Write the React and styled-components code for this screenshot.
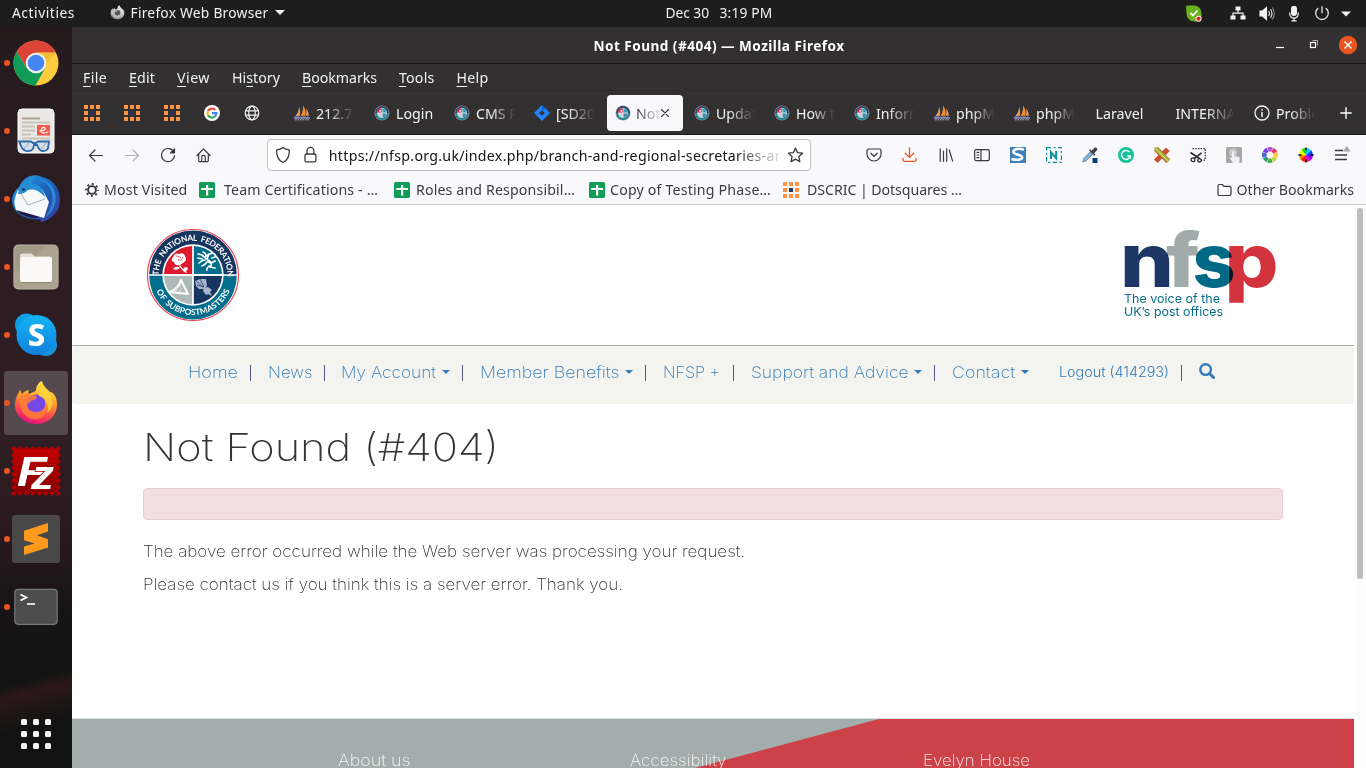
import React, { useLayoutEffect, useRef, useState } from "react";
import styled, { createGlobalStyle, css } from "styled-components";

const UI_FONT = `"Noto Sans", "Open Sans", sans-serif`;
const PAGE_FONT = `"Inter", "Open Sans", sans-serif`;

const GlobalStyle = createGlobalStyle`
  * { box-sizing: border-box; }
  body { margin: 0; background: #131313; overflow: hidden; font-family: ${UI_FONT}; }
  h1, p { margin: 0; }
`;

/* ---------- text set to a given measure ---------- */

const Tracked = styled.span`
  flex: none;
  display: inline-block;
  white-space: pre;
  transform-origin: 0 50%;
`;

/* Tracks the text to the width w; with `wide` it widens the letters instead. */
function Fit({ w, wide, children, ...rest }) {
  const ref = useRef(null);
  const [fit, setFit] = useState({});
  useLayoutEffect(() => {
    const range = document.createRange();
    range.selectNodeContents(ref.current);
    const natural = range.getBoundingClientRect().width;
    setFit(
      wide
        ? { transform: `scaleX(${w / natural})` }
        : { letterSpacing: `${(w - natural) / ref.current.textContent.length}px` }
    );
  }, [w, wide]);
  return (
    <Tracked ref={ref} style={{ ...fit, width: w }} {...rest}>
      {children}
    </Tracked>
  );
}

/* ---------- shell ---------- */

const Desktop = styled.div`
  width: 1366px;
  height: 768px;
  display: flex;
  flex-direction: column;
  overflow: hidden;
`;

const TopBar = styled.header`
  height: 27px;
  flex: none;
  display: grid;
  grid-template-columns: 1fr auto 1fr;
  align-items: center;
  padding: 0 15px 0 12px;
  background: #1d1d1d;
  color: #f2f2f2;
  font-size: 13.8px;
  line-height: 24px;
`;

const TopLeft = styled.div`
  display: flex;
  align-items: center;
  padding-bottom: 2px;
`;

const AppMenu = styled.div`
  display: flex;
  align-items: center;
  gap: 6px;
  margin-left: 34.5px;
`;

const Clock = styled.div`
  display: flex;
  gap: 10.5px;
  padding: 0 0 2px 75px;
`;

const Status = styled.div`
  display: flex;
  align-items: center;
  justify-content: flex-end;
`;

const StatusIcon = styled.svg`
  flex: none;
  margin-left: ${(p) => p.$gap || 0}px;
`;

const Caret = styled.i`
  border: ${(p) => p.$size || 4}px solid transparent;
  border-top: ${(p) => (p.$size || 4)}px solid currentColor;
  border-bottom: 0;
`;

const Body = styled.div`
  flex: 1;
  display: flex;
  min-height: 0;
`;

/* ---------- dock ---------- */

const Dock = styled.nav`
  width: 72px;
  flex: none;
  display: flex;
  flex-direction: column;
  gap: 4px;
  padding: 4px 4px 0;
  background:
    linear-gradient(165deg, transparent 87%, rgba(62, 30, 26, 0.55) 88.5%, transparent 93%),
    linear-gradient(#241b1d 0, #2b1c21 18%, #2f1e24 55%, #2a1a1f 68%, #181415 78%, #131313 84%, #141313 100%);
`;

const DockCell = styled.div`
  position: relative;
  height: 64px;
  flex: none;
  display: grid;
  place-items: center;
  border-radius: 4px;
  background: ${(p) => (p.$active ? "#544a4e" : "transparent")};
  &::before {
    content: "";
    position: absolute;
    left: 0;
    top: 29px;
    width: 6px;
    height: 6px;
    border-radius: 50%;
    background: #e95420;
  }
`;

const AppGrid = styled.div`
  margin-top: auto;
  margin-bottom: 19px;
  align-self: center;
  display: grid;
  grid-template-columns: repeat(3, 6px);
  grid-auto-rows: 6px;
  gap: 6px;
  i { background: #f4f4f4; border-radius: 1.5px; }
`;

/* ---------- browser chrome ---------- */

const Browser = styled.main`
  flex: 1;
  min-width: 0;
  display: flex;
  flex-direction: column;
`;

const TitleBar = styled.div`
  height: 37px;
  flex: none;
  display: grid;
  grid-template-columns: 1fr auto 1fr;
  align-items: center;
  background: #333031;
  border-bottom: 1px solid #1b1a1a;
  color: #fff;
  font-size: 13.6px;
  font-weight: 700;
`;

const WindowTitle = styled.div`
  grid-column: 2;
`;

const WindowButtons = styled.div`
  display: flex;
  justify-content: flex-end;
  padding-right: 8px;
`;

const MenuBar = styled.div`
  height: 27px;
  flex: none;
  display: flex;
  align-items: center;
  gap: 22px;
  padding: 2px 0 0 11px;
  background: #333031;
  border-bottom: 1px solid #2d2a2b;
  color: #f1f1f1;
  font-size: 14.2px;
  line-height: 20px;
  u { text-underline-offset: 3px; text-decoration-thickness: 1px; text-decoration-skip-ink: none; }
`;

const TabStrip = styled.div`
  height: 44px;
  flex: none;
  display: flex;
  align-items: center;
  background: #333031;
  border-bottom: 1px solid #1b1a1a;
  color: #f4f4f4;
  font-size: 14.2px;
`;

const PinnedTab = styled.div`
  width: 40px;
  display: grid;
  place-items: center;
`;

const Tab = styled.div`
  width: 76px;
  height: 36px;
  margin: 0 2px;
  padding: 0 8px 0 ${(p) => (p.$bare ? 8.5 : 7)}px;
  flex: none;
  display: flex;
  align-items: center;
  gap: 6px;
  border-radius: 4px;
  ${(p) => p.$active && css`
    background: #f9f9fb;
    color: #3a393c;
    padding-left: 8px;
    padding-right: 10px;
    gap: 5px;
  `}
  ${(p) => p.$first && css`margin-left: 15px;`}
`;

const TabLabel = styled.span`
  flex: 1;
  min-width: 0;
  overflow: hidden;
  white-space: pre;
  padding-top: 2px;
  line-height: 22px;
  ${(p) => p.$fade && css`mask-image: linear-gradient(to right, #000 ${p.$fade}%, transparent 100%);`}
`;

const ActiveTabLabel = styled(TabLabel)`
  flex: none;
  width: 26px;
  margin-right: -7px;
`;

const NewTab = styled.div`
  width: 41px;
  display: grid;
  place-items: center;
`;

const NavBar = styled.div`
  height: 40px;
  flex: none;
  display: flex;
  align-items: center;
  padding: 0 5px 0 6px;
  background: #f9f9fb;
`;

const ToolButton = styled.div`
  width: 36px;
  height: 36px;
  flex: none;
  display: grid;
  place-items: center;
`;

const UrlBox = styled.div`
  width: 544px;
  height: 32px;
  margin-left: 45px;
  margin-right: 45px;
  flex: none;
  display: flex;
  align-items: center;
  gap: 9.5px;
  padding: 0 6px;
  border: 1px solid #bfbfc3;
  border-radius: 4px;
  background: #fff;
  color: #131313;
  font-size: 14.2px;
`;

const UrlText = styled.div`
  width: 452px;
  overflow: hidden;
  mask-image: linear-gradient(to right, #000 90%, rgba(0, 0, 0, 0.12) 100%);
`;

const Bookmarks = styled.div`
  height: 30px;
  flex: none;
  display: flex;
  align-items: center;
  padding: 0 12px 0 12px;
  background: #f9f9fb;
  border-bottom: 1px solid #c9c9cb;
  color: #3d3b3f;
  font-size: 14.2px;
  line-height: 22px;
`;

const Bookmark = styled.div`
  display: flex;
  align-items: center;
  gap: ${(p) => p.$gap}px;
  margin-left: ${(p) => p.$before}px;
`;

/* ---------- page ---------- */

const Viewport = styled.div`
  flex: 1;
  min-height: 0;
  display: flex;
  background: #fff;
  font-family: ${PAGE_FONT};
`;

const Page = styled.div`
  width: 1282px;
  display: flex;
  flex-direction: column;
`;

const ScrollTrack = styled.div`
  width: 12px;
  padding: 3px 3px 0;
  background: #fdfdfd;
`;

const ScrollThumb = styled.div`
  height: 371px;
  border-radius: 3px;
  background: #bdbdbd;
`;

const Masthead = styled.div`
  height: 141px;
  flex: none;
  display: flex;
  justify-content: space-between;
  align-items: flex-start;
  padding: 23px 76px 0 74px;
  border-bottom: 1px solid #a3adab;
`;

const SiteNav = styled.div`
  height: 58px;
  flex: none;
  display: flex;
  align-items: center;
  padding: 0 0 6px 116px;
  background: #f3f4ef;
  border-radius: 4px;
  color: #337ab7;
`;

const NavLink = styled.a`
  display: flex;
  align-items: center;
  gap: 6px;
  font-size: ${(p) => (p.$small ? 13.8 : 15.6)}px;
  font-weight: ${(p) => (p.$small ? 350 : 240)};
  margin-left: ${(p) => p.$before || 0}px;
`;

const Divider = styled.i`
  width: 1px;
  height: 16px;
  background: #5a5580;
  margin: 1px 0 0 ${(p) => p.$before}px;
`;

const Content = styled.section`
  flex: 1;
  padding: 0 71px;
  color: #333;
  font-size: 15.4px;
  font-weight: 250;
`;

const Heading = styled.h1`
  margin: 20px 0 17px 0;
  height: 47px;
  line-height: 47px;
  font-size: 38.5px;
  font-weight: 200;
`;

const Alert = styled.div`
  height: 32px;
  border: 1px solid #ebccd1;
  border-radius: 4px;
  background: #f2dede;
  margin-bottom: 20px;
`;

const Paragraph = styled.p`
  line-height: 23px;
  margin-bottom: 10px;
`;

const Footer = styled.footer`
  position: relative;
  height: 50px;
  flex: none;
  display: flex;
  padding: 31px 0 0 265.5px;
  background: #a3adab;
  border-top: 1px solid #d9dddc;
  color: #fff;
  font-size: 15.4px;
  font-weight: 250;
  line-height: 22px;
  overflow: hidden;
  &::before {
    content: "";
    position: absolute;
    inset: 0;
    background: #cc4248;
    clip-path: polygon(807px 0, 100% 0, 100% 100%, 623px 100%);
  }
`;

const FooterColumn = styled.div`
  position: relative;
  width: 292.5px;
  opacity: 0.9;
`;

/* ---------- icons ---------- */

const Line = ({ size = 16, w = size, h = size, color = "#3a393c", sw = 1.2, children }) => (
  <svg width={w} height={h} viewBox={`0 0 ${w} ${h}`} fill="none" stroke={color} strokeWidth={sw} strokeLinecap="round" strokeLinejoin="round">
    {children}
  </svg>
);

const DotGrid = () => (
  <svg width="16" height="16" viewBox="0 0 16 16">
    {[0, 6, 12].map((y) =>
      [0, 6, 12].map((x) => (
        <rect key={x + "-" + y} x={x} y={y} width="4" height="4" fill={x === 6 && y === 6 ? "#2f2f63" : "#ff9442"} />
      ))
    )}
  </svg>
);

const GoogleIcon = () => (
  <svg width="16" height="16" viewBox="0 0 16 16" fill="none" strokeWidth="2.2">
    <circle cx="8" cy="8" r="8" fill="#fff" />
    <path d="M11.3 4.9A4.5 4.5 0 0 0 4 6" stroke="#ea4335" />
    <path d="M4 6a4.5 4.5 0 0 0 0 4.2" stroke="#fbbc05" />
    <path d="M4 10.2a4.5 4.5 0 0 0 7.1 1.1" stroke="#34a853" />
    <path d="M8 8.1h4.5a4.5 4.5 0 0 1-1.5 3.2" stroke="#4285f4" />
  </svg>
);

const Globe = () => (
  <Line color="#f4f4f4" sw={1.2}>
    <circle cx="8" cy="8" r="6.8" />
    <ellipse cx="8" cy="8" rx="3.3" ry="6.8" />
    <path d="M1.6 5.8h12.8M1.6 10.2h12.8" />
  </Line>
);

const Sails = () => (
  <svg width="16" height="16" viewBox="0 0 16 16">
    <path d="M4.8 2.2C4.8 6 3.6 8.8 1.2 11.4l3.6-.6z" fill="#cfcbd0" />
    <path d="M5 1.8c1.3 3 1.5 6 .9 9l-3.4.4C4.4 8.5 5 5.3 5 1.8z" fill="#f6923a" />
    <path d="M9 .4c2.6 3.4 3.2 7 2.5 10.3l-5 .3C8.6 8 9.2 4.2 9 .4z" fill="#f08a2c" />
    <path d="M12.2 3.4c1.8 2.2 2.5 4.6 2.5 7.4l-2.6-.2c.5-2.5.5-4.8.1-7.2z" fill="#f6a55a" />
    <path d="M.6 12.2h14.8v1H.6zM1 14.8h14" fill="#8b8db5" stroke="#8b8db5" strokeWidth="1.4" strokeDasharray="1.6 .9" />
  </svg>
);

const MiniCrest = () => (
  <svg width="16" height="16" viewBox="0 0 16 16">
    <circle cx="8" cy="8" r="7.5" fill="#b3858f" />
    <path d="M1.1 8a6.9 6.9 0 0 1 13.8 0z" fill="#274a73" />
    <path d="M1.1 8a6.9 6.9 0 0 0 13.8 0z" fill="#1b879b" />
    <circle cx="8" cy="8" r="4.9" fill="#d3e2e8" />
    <path d="M7.6 7.6V3.2A4.8 4.8 0 0 0 3.2 7.6z" fill="#ee1a36" />
    <path d="M8.5 7.6V3.6a4.4 4.4 0 0 1 4 4z" fill="#38a0b5" />
    <path d="M7.6 8.5v4a4.4 4.4 0 0 1-4-4z" fill="#c9d4d4" />
    <path d="M8.5 8.5v4a4.4 4.4 0 0 0 4-4z" fill="#5d7fa0" />
    <circle cx="6.2" cy="5.9" r=".9" fill="#fff" />
  </svg>
);

const Diamond = () => (
  <svg width="16" height="16" viewBox="0 0 16 16">
    <path d="M8 0l8 8-8 8-8-8z" fill="#2383fb" />
    <path d="M8 5.2L10.8 8 8 10.8 5.2 8z" fill="#333031" />
    <path d="M8 0l3 3.2c.2 1.6-1.2 2-3 2z" fill="#0b5fd6" />
  </svg>
);

const InfoIcon = () => (
  <Line color="#f4f4f4" sw={1.3}>
    <circle cx="8" cy="8" r="7" />
    <path d="M8 7.4v4M8 4.6v.3" strokeWidth="1.5" />
  </Line>
);

const Sheet = () => (
  <svg width="16" height="16" viewBox="0 0 16 16">
    <rect width="16" height="16" rx="1.5" fill="#0f9d58" />
    <path d="M7 3h2.2v3H14v2H9.2v5.5H7V8H2.2V6H7z" fill="#fff" />
  </svg>
);

const GearIcon = () => (
  <svg width="14" height="14" viewBox="0 0 14 14" fill="none" stroke="#3a393c">
    <circle cx="7" cy="7" r="3.9" strokeWidth="1.9" />
    <circle cx="7" cy="7" r="5.9" strokeWidth="2" strokeDasharray="1.9 2.734" strokeDashoffset=".95" />
  </svg>
);

const FolderIcon = () => (
  <Line w={15} h={14}>
    <path d="M1 11V3a1.5 1.5 0 0 1 1.5-1.5h2.8L7 3.3h5.5A1.5 1.5 0 0 1 14 4.8V11a1.5 1.5 0 0 1-1.5 1.5h-10A1.5 1.5 0 0 1 1 11z" />
  </Line>
);

const toolIcons = [
  <Line key="pocket"><path d="M2.5 2h11A1.5 1.5 0 0 1 15 3.5V7a7 7 0 0 1-14 0V3.5A1.5 1.5 0 0 1 2.5 2zM4.8 6.2L8 9.3l3.2-3.1" /></Line>,
  <Line key="download" color="#e95420" sw={1.3}><path d="M7.5 .8v9.5M3.2 6.2l4.3 4.2 4.3-4.2M1 11.5v1.3a1.5 1.5 0 0 0 1.5 1.5h10a1.5 1.5 0 0 0 1.5-1.5v-1.3" /></Line>,
  <Line key="library"><path d="M2.2 1.8v12.5M5.5 4v10.3M8.7 1.8v12.5M11.3 3l3.3 11.2" /></Line>,
  <Line key="sidebar"><rect x=".7" y="2.7" width="14.6" height="11" rx="1.6" /><path d="M7 2.7v11M2.9 5.3h2M2.9 8h2M2.9 10.7h2" /></Line>,
  <svg key="s" width="16" height="16" viewBox="0 0 16 16"><rect width="16" height="16" fill="#3f82b8" /><path d="M14 2.8C9.5.8 3.5 1.8 3.3 4.8c0 3.3 8.9 2.5 8.9 5.5 0 2.6-6 3.3-10.7 1.7" fill="none" stroke="#fff" strokeWidth="2.5" /></svg>,
  <svg key="n" width="16" height="16" viewBox="0 0 16 16" fill="none" stroke="#0c8f96"><rect x=".6" y=".6" width="14.8" height="14.8" strokeWidth="1.2" strokeDasharray="4.5 2.4 2 2.4" /><path d="M5 12V5.2l5.2 6V4" strokeWidth="2.1" /></svg>,
  <svg key="dropper" width="16" height="16" viewBox="0 0 16 16"><path d="M.8 15l1-3.5L8 5l2.5 2.5-6.3 6.2z" fill="#7db4e2" stroke="#6c7c8c" strokeWidth=".8" /><path d="M7 3.4l5.5 5.4 1-1-1.4-1.6 2.7-2.7c1.5-1.9-.8-4-2.6-2.5L9.6 3.7 8.2 2.3z" fill="#3c434b" /><rect x="10.5" y="11" width="5" height="5" fill="#043b7c" /></svg>,
  <svg key="g" width="16" height="16" viewBox="0 0 16 16" fill="none" stroke="#fff" strokeWidth="1.5"><circle cx="8" cy="8" r="8" fill="#15c39a" stroke="none" /><path d="M11.5 5A4.5 4.5 0 1 0 12.4 9H9.3M12.4 9v2.6" /></svg>,
  <svg key="cross" width="16" height="16" viewBox="0 0 16 16"><path d="M0 3.8L3.8 0 16 12.2 12.4 16z" fill="#c94f35" /><path d="M3.5 16L0 12.5 12 .4 15.8 4z" fill="#c94f35" /><path d="M13.5 15.5L16 13 3 .5.3.3.5 3z" fill="#a3c13c" /><path d="M2 2l11.500 11.500" stroke="#cbdc74" /></svg>,
  <svg key="scissors" width="16" height="16" viewBox="0 0 16 16" fill="none" stroke="#2c2c2e"><path d="M2.5 1.6h12.7v11.5H11" strokeWidth="1.3" strokeDasharray="1.5 1.2" /><path d="M.5 5.5L9.500 11.500M11.500 5.800L4 11.800" strokeWidth="1.600" /><circle cx="3" cy="12.800" r="1.900" strokeWidth="1.300" /><circle cx="9.500" cy="13.300" r="1.700" strokeWidth="1.300" /></svg>,
  <svg key="touch" width="16" height="16" viewBox="0 0 16 16"><rect width="16" height="16" rx="1.5" fill="#a8a8a8" /><circle cx="7" cy="5.5" r="4" fill="#c9c9c9" /><path d="M6 5.5c0-1.6 2.1-1.6 2.1 0V9l4.3.8c1 .2 1.4.9 1.3 1.800L13.200 16H7L4 11.500c-.6-1 .7-1.700 1.400-.9l.6.700z" fill="#eef2f6" /></svg>,
  <svg key="wheel" width="16" height="16" viewBox="0 0 16 16" fill="none" strokeWidth="4.4">
    {["#ffc93a", "#c5d63a", "#50a83f", "#2e9c75", "#3a5fe0", "#7c3fe0", "#b04fd8", "#e7375a"].map((c, i) => (
      <circle key={c} cx="8" cy="8" r="5.7" stroke={c} strokeDasharray="3.9 31.9" transform={`rotate(${i * 45 - 20} 8 8)`} />
    ))}
  </svg>,
  <svg key="color" width="16" height="16" viewBox="0 0 16 16" fill="none" strokeWidth="7">
    {["#ff8a00", "#ff1e00", "#ff00c8", "#8b00ff", "#0047ff", "#00d5ff", "#1fd800", "#e8ff00"].map((c, i) => (
      <circle key={c} cx="8" cy="8" r="3.5" stroke={c} strokeDasharray="2.8 19.2" transform={`rotate(${-i * 45 + 135} 8 8)`} />
    ))}
    <path d="M8 .4v3M8 12.6v3M.4 8h3M12.6 8h3" stroke="#111" strokeWidth="1.5" />
  </svg>,
  <svg key="menu" width="20" height="20" viewBox="0 0 20 20"><path d="M3 5.500h8M3 10h12M3 14.500h12" stroke="#3a393c" strokeWidth="1.300" /><path d="M11 6.600L14.800 .8l3.800 5.800z" fill="#a9a9ab" /></svg>,
];

/* ---------- dock logos ---------- */

const ChromeLogo = () => (
  <svg width="46" height="46" viewBox="-23 -23 46 46">
    <circle r="22.5" fill="#fccb3e" />
    <path d="M-19.5-11.3A22.5 22.5 0 0 1 19.8-10.5H0L-9.3 5z" fill="#dc4437" />
    <path d="M-19.5-11.3A22.5 22.5 0 0 0-.6 22.5L9.2 5.3 0 10.6-9.3 5z" fill="#109c58" />
    <path d="M19.8-10.5H0L7 4z" fill="#e9b030" opacity=".5" />
    <circle r="10.3" fill="#f3f3f3" />
    <circle r="8.3" fill="#4586f4" />
  </svg>
);

const ReaderLogo = () => (
  <svg width="50" height="48" viewBox="0 0 50 48">
    <rect x="7" y="2" width="36" height="44" rx="4" fill="#e9e8e6" stroke="#fff" strokeWidth="1" />
    <path d="M11 11.5h18" stroke="#aea48f" strokeWidth="2" />
    <path d="M11 15.5h28M11 19.5h13M11 23.5h13M11 27.5h9M11 31.5h28" stroke="#c9c4b8" strokeWidth="1.8" />
    <rect x="26" y="18" width="13" height="10.5" fill="#f6574a" />
    <path d="M28.5 24c5 .5 7.5-3 4.5-3.5s-4.500 6 0 5.500c2 0 3-.6 4.500-1.600" fill="none" stroke="#fff" strokeWidth="1.2" />
    <path d="M8 34.500h12l2 1.500h3l2-1.500h11l-1 7q-2 3-5.500 2.500t-5.500-6h-3q-.5 5.500-5 6t-7-3z" fill="#d5e1ea" stroke="#2e68af" strokeWidth="1.800" />
    <path d="M13 42l5-6M30 42l5-6" stroke="#8aa5b6" />
  </svg>
);

const ThunderbirdLogo = () => (
  <svg width="50" height="50" viewBox="0 0 50 50">
    <defs>
      <linearGradient id="tb" x1="0" y1="0" x2="1" y2="1"><stop offset="0" stopColor="#2aa2ea" /><stop offset=".5" stopColor="#1c62bd" /><stop offset="1" stopColor="#383a9a" /></linearGradient>
    </defs>
    <path d="M8 13C13 1 24-1 31 3c10 2 18 10 18 23 0 10-6 17-15 21-3 1.5-7 1-4-2-12 2-28-4-29-18 0-6 3-11 7-14z" fill="url(#tb)" />
    <path d="M10 40Q5 37 5 32l25 8q-3 8-20 0z" fill="#1f1848" />
    <path d="M7 16l24-1 7 13-5 16L5 36Q1 27 7 16z" fill="#f7f8fa" />
    <path d="M8 17l9 14 17-6" fill="none" stroke="#a9adb4" strokeWidth="1" />
    <path d="M7 20C9 7 18 2 25 3c-3 3-5 4-5 7 8 0 12 4 14 13-8-8-14-9-17-7-3 3-6 4-10 4z" fill="#248fd2" />
    <path d="M27 5c10 3 16 11 14 25-3 8-5 11-8 14 13-7 15-24 7-33-4-4-8-6-13-6z" fill="#2e9be0" opacity=".7" />
    <circle cx="12.5" cy="15.5" r="1.3" fill="#1b2344" />
  </svg>
);

const FilesLogo = () => (
  <svg width="46" height="46" viewBox="0 0 46 46">
    <rect x="1" y="1" width="44" height="44" rx="4.5" fill="#a29a85" stroke="#bab5a4" strokeWidth="1.2" />
    <path d="M2 30L34 2h8q2 0 2 2v38q0 2-2 2H4q-2 0-2-2z" fill="#b2ab99" opacity=".6" />
    <path d="M7 12q0-2.5 2.5-2.5h9q1.5 0 3 3h16Q39 12.5 39 15H7z" fill="#e3dfd6" />
    <rect x="7" y="13" width="32" height="25" rx="2.5" fill="#faf9f8" />
    <path d="M9 38.5h28" stroke="#8c8570" />
  </svg>
);

const SkypeLogo = () => (
  <svg width="46" height="46" viewBox="0 0 46 46">
    <defs><linearGradient id="sk" x1="0" y1="0" x2="0" y2="1"><stop offset="0" stopColor="#14b5f3" /><stop offset="1" stopColor="#1180dc" /></linearGradient></defs>
    <circle cx="13.5" cy="13" r="11.5" fill="#0f9de4" />
    <circle cx="33" cy="33" r="11" fill="#1a91dc" />
    <circle cx="23.5" cy="23" r="20" fill="url(#sk)" />
    <text x="23.5" y="34" textAnchor="middle" fontFamily="Noto Sans" fontWeight="800" fontSize="31" fill="#fff">S</text>
  </svg>
);

const FirefoxLogo = ({ size = 46, mono }) => (
  <svg width={size} height={size} viewBox="0 0 46 46">
    <defs>
      <linearGradient id={mono ? "fxm" : "fx"} x1=".7" y1="0" x2=".4" y2="1">
        <stop offset="0" stopColor={mono ? "#eee" : "#fff24a"} /><stop offset=".4" stopColor={mono ? "#ccc" : "#ffa52c"} /><stop offset=".75" stopColor={mono ? "#aaa" : "#ff4550"} /><stop offset="1" stopColor={mono ? "#888" : "#e2107e"} />
      </linearGradient>
    </defs>
    <path d="M29 1c1 5 5 8 8 11 4 0 7 6 7 12 0 12-9 20-21 20S2 35 2 25c0-7 3-11 5-15 1 0 1 3 2 4 3-3 5-4 7-4-1 1-1 3 0 4 4-2 6-2 7-4 0-4 3-8 6-9z" fill={`url(#${mono ? "fxm" : "fx"})`} />
    <circle cx="23" cy="24" r="9.5" fill={mono ? "#555" : "#7548e6"} />
    <path d="M7 17c4-4 7-4 10-2 3 0 5 0 7 2-1 3-4 3-6 4s-2 3-4 3c0 5 4 8 9 8 7 0 10-5 9-11 4 6 2 16-7 18C15 41 5 32 7 17z" fill={mono ? "#bdbdbd" : "#ff7f35"} opacity=".85" />
    <path d="M29 2c1 7 10 9 10 21 0 5-2 8-5 10 3-9-2-15-8-17 0-6 0-10 3-14z" fill={mono ? "#ddd" : "#ffd43d"} opacity=".8" />
  </svg>
);

const FileZillaLogo = () => (
  <svg width="50" height="50" viewBox="0 0 50 50">
    <defs><linearGradient id="fz" x1="0" y1="0" x2="0" y2="1"><stop offset="0" stopColor="#c40000" /><stop offset="1" stopColor="#850000" /></linearGradient></defs>
    <rect x="2.5" y="2.5" width="45" height="45" fill="url(#fz)" />
    <rect x="2.5" y="2.500" width="45" height="45" fill="none" stroke="#b00000" strokeWidth="4.200" strokeDasharray="0 6.429" strokeLinecap="round" />
    <text x="6" y="40" fontFamily="Liberation Sans" fontStyle="italic" fontWeight="700" fontSize="43" textLength="30" lengthAdjust="spacingAndGlyphs" fill="#fff">F</text>
    <text x="20" y="43" fontFamily="Liberation Sans" fontStyle="italic" fontWeight="700" fontSize="41" textLength="23" lengthAdjust="spacingAndGlyphs" fill="#fff" stroke="#a00000" strokeWidth="1.5" paintOrder="stroke">z</text>
  </svg>
);

const SublimeLogo = () => (
  <svg width="48" height="48" viewBox="0 0 48 48">
    <rect width="48" height="48" rx="2.5" fill="#484848" />
    <path d="M12 31.5l24-7v8L12 40z" fill="#ff9a1d" />
    <path d="M12 16l13 6.500 11 2.500v7.500l-24-7.500z" fill="#f08c12" />
    <path d="M36 8v8.500l-11 3.800 11 4V33l-9-3-15-5V15.700z" fill="#ff9a1d" />
  </svg>
);

const TerminalLogo = () => (
  <svg width="44" height="38" viewBox="0 0 44 38">
    <rect x=".8" y="1.3" width="42.4" height="35" rx="3.5" fill="#4c4c4c" stroke="#777" strokeWidth="1.2" />
    <path d="M6.5 6.5l6 3-6 3" fill="none" stroke="#fff" strokeWidth="1.7" />
    <path d="M13 16h8" stroke="#fff" strokeWidth="1.6" />
  </svg>
);

const dockApps = [
  { id: "chrome", Logo: ChromeLogo },
  { id: "reader", Logo: ReaderLogo },
  { id: "thunderbird", Logo: ThunderbirdLogo },
  { id: "files", Logo: FilesLogo },
  { id: "skype", Logo: SkypeLogo },
  { id: "firefox", Logo: FirefoxLogo, active: true },
  { id: "filezilla", Logo: FileZillaLogo },
  { id: "sublime", Logo: SublimeLogo },
  { id: "terminal", Logo: TerminalLogo },
];

/* ---------- site logos ---------- */

const Crest = () => (
  <svg width="94" height="94" viewBox="-47 -47 94 94">
    <defs>
      <path id="arcTop" d="M-34.3 4A34.5 34.5 0 1 1 34.3 4" />
      <path id="arcBottom" d="M-40 0A40 40 0 0 0 40 0" />
    </defs>
    <circle r="45.5" fill="#fff" stroke="#e8414d" strokeWidth="1.1" />
    <path d="M-43.8-.7A43.8 43.8 0 0 1 43.8-.7z" fill="#17365f" />
    <path d="M-43.8 .7A43.8 43.8 0 0 0 43.8 .7z" fill="#006e8c" />
    <circle r="30.7" fill="#fff" />
    <path d="M-.9-.9H-29A29 29 0 0 1-.9-29z" fill="#dc1a2b" />
    <path d="M.9-.9H29A29 29 0 0 0 .9-29z" fill="#006e8c" />
    <path d="M-.9 .9H-29A29 29 0 0 0-.9 29z" fill="#aebab8" />
    <path d="M.9 .9H29A29 29 0 0 1 .9 29z" fill="#17365f" />
    <path d="M-20-18q2-5 6-3 5-2 6 2 3 5-2 7l-3 2q-5 1-6-3-4-1-1-5z" fill="#fff" />
    <path d="M-13-10l3 4q4-4 5 0l-2 2 1 2-3-1-5-6z" fill="#fff" />
    <path d="M-20-6q3-4 7-1-3 3-7 1z" fill="#fff" />
    <path d="M-17-19q4 0 5 2m2-1q-1 4-5 3" fill="none" stroke="#dc1a2b" strokeWidth=".7" />
    <g fill="none" stroke="#fff" strokeWidth="1.7" strokeLinecap="round">
      <path d="M5-21q4 0 6 3l4 3q4 2 3 6M10-23q3 1 3 4l6-3M16-21l-2 5M12-15q-3 0-6 3M9-16l-4-1M14-13q-2 3-5 4M15-13l3 1 4-2M17-8l5 1M16-9q-3 3-2 4M19-17l3-1" />
      <path d="M-23 17q9-4 11-12 3 6 7 14l-18-2" strokeWidth="2" strokeLinejoin="round" />
      <path d="M-18 17l6-7M-14 17l3-4" strokeWidth=".6" />
    </g>
    <path d="M2 6l5-2 6 0 1 7-3 3-5 0-3-3zM11 13l4-1 4 3-2 2 2 4-4-2-2 1-3-4z" fill="#a6b5cc" />
    <path d="M3 6l7 6M7 4l4 8M4 10l7 2" stroke="#17365f" strokeWidth=".7" />
    <g fill="#fff" fontFamily="Lato" fontWeight="700">
      <text fontSize="8.3" wordSpacing="2"><textPath href="#arcTop" startOffset="3.500" textLength="110" lengthAdjust="spacing">THE NATIONAL FEDERATION</textPath></text>
      <text fontSize="8.300" wordSpacing="1.500"><textPath href="#arcBottom" startOffset="16.500" textLength="93" lengthAdjust="spacing">OF SUBPOSTMASTERS</textPath></text>
    </g>
  </svg>
);

const BrandSvg = styled.svg`
  text { font-family: "Inter", sans-serif; font-weight: 850; font-size: 75px; mix-blend-mode: multiply; }
  text.tag { font-weight: 400; font-size: 11.9px; }
`;

const Brand = () => (
  <BrandSvg width="156" height="92" viewBox="0 0 156 92">
    <text x="-2" y="59" textLength="54" lengthAdjust="spacingAndGlyphs" fill="#1c3766">n</text>
    <text x="44" y="59" textLength="34" lengthAdjust="spacingAndGlyphs" fill="#a0abaa">f</text>
    <text x="70.5" y="59" textLength="43" lengthAdjust="spacingAndGlyphs" fill="#006a86">s</text>
    <text x="102.5" y="59" textLength="54" lengthAdjust="spacingAndGlyphs" fill="#d2333d">p</text>
    <text className="tag" x="2" y="75" textLength="96" lengthAdjust="spacingAndGlyphs" fill="#0a6e88">The voice of the</text>
    <text className="tag" x="2" y="88" textLength="99" lengthAdjust="spacingAndGlyphs" fill="#0a6e88">UK’s post offices</text>
  </BrandSvg>
);

/* ---------- data ---------- */

const menus = [
  ["", "F", "ile", 24], ["", "E", "dit", 26], ["", "V", "iew", 33], ["Hi", "s", "tory", 48],
  ["", "B", "ookmarks", 75], ["", "T", "ools", 35.5], ["", "H", "elp", 32],
];

const tabs = [
  { icon: <Sails />, label: "212.7", fade: 25 },
  { icon: <MiniCrest />, label: "Login" },
  { icon: <MiniCrest />, label: "CMS P", fade: 40 },
  { icon: <Diamond />, label: "[SD20", fade: 30 },
  { icon: <MiniCrest />, label: "Not", active: true },
  { icon: <MiniCrest />, label: "Updat", fade: 30 },
  { icon: <MiniCrest />, label: "How t", fade: 40 },
  { icon: <MiniCrest />, label: "Inform", fade: 30 },
  { icon: <Sails />, label: "phpM", fade: 40 },
  { icon: <Sails />, label: "phpM", fade: 40 },
  { label: "Laravel" },
  { label: "INTERNA", fade: 50 },
  { icon: <InfoIcon />, label: "Proble", fade: 35 },
];

const siteLinks = [
  { label: "Home", w: 50, before: 0, bar: 12 },
  { label: "News", w: 44.5, before: 16.5, bar: 11.5 },
  { label: "My Account", w: 95, before: 16.5, caret: true, bar: 11.5 },
  { label: "Member Benefits", w: 139.5, before: 17, caret: true, bar: 11.5 },
  { label: "NFSP +", w: 57, before: 17.5, bar: 12.5 },
  { label: "Support and Advice", w: 157.5, before: 17, caret: true, bar: 11.5 },
  { label: "Contact", w: 63, before: 17, caret: true },
  { label: "Logout (414293)", w: 110, before: 30, small: true, bar: 12 },
];

export default function App() {
  return (
    <Desktop>
      <GlobalStyle />
      <TopBar>
        <TopLeft>
          <Fit w={63}>Activities</Fit>
          <AppMenu>
            <FirefoxLogo size={15} mono />
            <Fit w={138}>Firefox Web Browser</Fit>
            <Caret $size={5} />
          </AppMenu>
        </TopLeft>
        <Clock>
          <Fit w={43.5}>Dec 30</Fit>
          <Fit w={53}>3:19 PM</Fit>
        </Clock>
        <Status>
          <StatusIcon width="18" height="18" viewBox="0 0 18 18">
            <path d="M1 1.5Q1 .5 3 .5h7q6 1 6.500 8v6q0 2-2 2H9Q2 15.500 1.500 8.500z" fill="#6bb21c" />
            <path d="M5.500 8l2.500 2.500 4.500-5" fill="none" stroke="#fff" strokeWidth="1.800" />
            <circle cx="13.500" cy="13.700" r="2.600" fill="#e2262d" stroke="#fff" strokeWidth="1" />
          </StatusIcon>
          <StatusIcon $gap={27} width="16" height="16" viewBox="0 0 16 16" fill="#f2f2f2">
            <path d="M5.5 .5h5v4h-5zM.5 9.5h5v4h-5zM10.5 9.5h5v4h-5z" />
            <path d="M8 4v3M3 10V7.2h10V10" fill="none" stroke="#f2f2f2" strokeWidth="1.2" />
          </StatusIcon>
          <StatusIcon $gap={13} width="16" height="16" viewBox="0 0 16 16" fill="none" stroke="#f2f2f2" strokeWidth="1.1">
            <path d="M1 5h2.5L7.5 1.500v12L3.500 10H1z" fill="#f2f2f2" />
            <path d="M9.500 5q2 2.500 0 5M11.500 3.300q3 4.200 0 8.400" />
            <path d="M13.300 1.500q4 6 0 12" opacity=".5" />
          </StatusIcon>
          <StatusIcon $gap={11} width="16" height="16" viewBox="0 0 16 16" fill="none" stroke="#f2f2f2" strokeWidth="1.2">
            <rect x="5.6" y=".3" width="4.8" height="9.2" rx="2.4" fill="#f2f2f2" />
            <path d="M3.8 6.5V8a4.2 4.2 0 0 0 8.4 0V6.5M8 12.1v2.4M5.5 14.8h5" />
          </StatusIcon>
          <StatusIcon $gap={12} width="16" height="16" viewBox="0 0 16 16" fill="none" stroke="#e4e4e4" strokeWidth="1.3">
            <path d="M4.3 2.1a6.3 6.3 0 1 0 7.4 0M8 .2v7" />
          </StatusIcon>
          <StatusIcon $gap={11} width="10" height="6" viewBox="0 0 10 6" fill="#f2f2f2"><path d="M0 .5h10L5 5.5z" /></StatusIcon>
        </Status>
      </TopBar>

      <Body>
        <Dock>
          {dockApps.map(({ id, Logo, active }) => (
            <DockCell key={id} $active={active}><Logo /></DockCell>
          ))}
          <AppGrid>{Array.from({ length: 9 }, (_, i) => <i key={i} />)}</AppGrid>
        </Dock>

        <Browser>
          <TitleBar>
            <WindowTitle><Fit w={251}>Not Found (#404) — Mozilla Firefox</Fit></WindowTitle>
            <WindowButtons>
              <svg width="84" height="20" viewBox="0 0 84 20" fill="none">
                <path d="M2 12.5h8" stroke="#fff" strokeWidth="1.2" />
                <rect x="36.5" y="7.5" width="5" height="5" stroke="#fff" strokeWidth="1.2" />
                <path d="M38.5 5.5h5v5" stroke="#aaa" />
                <circle cx="74" cy="10" r="9.2" fill="#e95420" />
                <path d="M70.5 6.5l7 7m0-7l-7 7" stroke="#fff" strokeWidth="1.5" />
              </svg>
            </WindowButtons>
          </TitleBar>
          <MenuBar>
            {menus.map(([a, key, b, w]) => <Fit key={a + key + b} w={w}>{a}<u>{key}</u>{b}</Fit>)}
          </MenuBar>
          <TabStrip>
            <PinnedTab><DotGrid /></PinnedTab>
            <PinnedTab><DotGrid /></PinnedTab>
            <PinnedTab><DotGrid /></PinnedTab>
            <PinnedTab><GoogleIcon /></PinnedTab>
            <PinnedTab><Globe /></PinnedTab>
            {tabs.map((t, i) => (
              <Tab key={i} $first={i === 0} $active={t.active} $bare={!t.icon}>
                {t.icon}
                {t.active ? (
                  <>
                    <ActiveTabLabel $fade={5}>{t.label}</ActiveTabLabel>
                    <Line size={10} sw={1.1}><path d="M1.500 1.500l7 7m0-7l-7 7" /></Line>
                  </>
                ) : (
                  <TabLabel $fade={t.fade}>{t.label}</TabLabel>
                )}
              </Tab>
            ))}
            <NewTab><Line size={12} color="#fff" sw={1.4}><path d="M6 .8v10.4M.8 6h10.4" /></Line></NewTab>
          </TabStrip>

          <NavBar>
            <ToolButton><Line sw={1.2}><path d="M14.5 8.5H1.5M7 3L1.5 8.5 7 14" /></Line></ToolButton>
            <ToolButton><Line sw={1.2} color="#b3b3b6"><path d="M1.5 8.5h13M9 3l5.5 5.5L9 14" /></Line></ToolButton>
            <ToolButton><Line sw={1.2}><path d="M14 5.5A6.5 6.5 0 1 0 14.5 8.5" /><path d="M14.5 2v4H10.5z" fill="#3a393c" /></Line></ToolButton>
            <ToolButton><Line sw={1.2}><path d="M1 8.5L7.5 1.8L14 8.5M2.7 7v6.5A1.2 1.2 0 0 0 3.9 14.7h7.2A1.2 1.2 0 0 0 12.3 13.5V7M5.7 14.5v-4.3a1.8 1.8 0 0 1 3.6 0v4.3" /></Line></ToolButton>
            <UrlBox>
              <Line w={18} h={18} sw={1.3}><path d="M9 1.5c2 1.8 4 2.2 6.3 2.4.4 5.3-1.1 10-6.3 12.6C3.8 13.9 2.3 9.2 2.7 3.9 5 3.7 7 3.3 9 1.5z" /></Line>
              <Line w={18} h={18} sw={1.3}><rect x="4" y="8" width="11" height="8" rx="1.5" /><path d="M6 8V4.8a3.5 3.5 0 0 1 7 0V8" /></Line>
              <UrlText><Fit w={452}>https://nfsp.org.uk/index.php/branch-and-regional-secretaries-ar</Fit></UrlText>
              <Line sw={1.3}><path d="M7.5 1l2.1 4.6 5 .6-3.7 3.4 1 5-4.4-2.5-4.4 2.5 1-5L.4 6.2l5-.6z" /></Line>
            </UrlBox>
            {toolIcons.map((icon) => <ToolButton key={icon.key}>{icon}</ToolButton>)}
          </NavBar>

          <Bookmarks>
            <Bookmark $before={1} $gap={5}><GearIcon /><Fit w={83.5}>Most Visited</Fit></Bookmark>
            <Bookmark $before={11.5} $gap={9}><Sheet /><Fit w={154}>Team Certifications - …</Fit></Bookmark>
            <Bookmark $before={16} $gap={6}><Sheet /><Fit w={159}>Roles and Responsibil…</Fit></Bookmark>
            <Bookmark $before={14} $gap={5}><Sheet /><Fit w={161}>Copy of Testing Phase…</Fit></Bookmark>
            <Bookmark $before={12} $gap={8}><DotGrid /><Fit w={155}>DSCRIC | Dotsquares …</Fit></Bookmark>
            <Bookmark $before={255} $gap={4.5}><FolderIcon /><Fit w={117.5}>Other Bookmarks</Fit></Bookmark>
          </Bookmarks>

          <Viewport>
            <Page>
              <Masthead><Crest /><Brand /></Masthead>
              <SiteNav>
                {siteLinks.map((l) => (
                  <React.Fragment key={l.label}>
                    <NavLink $before={l.before} $small={l.small}>
                      <Fit wide w={l.w}>{l.label}</Fit>
                      {l.caret && <Caret />}
                    </NavLink>
                    {l.bar && <Divider $before={l.bar} />}
                  </React.Fragment>
                ))}
                <NavLink $before={17.5}>
                  <svg width="16" height="18" viewBox="0 0 16 18" fill="none" stroke="#337ab7">
                    <circle cx="6.6" cy="6.600" r="5.300" strokeWidth="2.400" />
                    <path d="M10.500 10.500l4 4" strokeWidth="3" strokeLinecap="round" />
                  </svg>
                </NavLink>
              </SiteNav>
              <Content>
                <Heading><Fit wide w={356}>Not Found (#404)</Fit></Heading>
                <Alert />
                <Paragraph><Fit wide w={602}>The above error occurred while the Web server was processing your request.</Fit></Paragraph>
                <Paragraph><Fit wide w={480}>Please contact us if you think this is a server error. Thank you.</Fit></Paragraph>
              </Content>
              <Footer>
                <FooterColumn><Fit wide w={72.5}>About us</Fit></FooterColumn>
                <FooterColumn><Fit wide w={96.5}>Accessibility</Fit></FooterColumn>
                <FooterColumn><Fit wide w={107}>Evelyn House</Fit></FooterColumn>
              </Footer>
            </Page>
            <ScrollTrack><ScrollThumb /></ScrollTrack>
          </Viewport>
        </Browser>
      </Body>
    </Desktop>
  );
}
